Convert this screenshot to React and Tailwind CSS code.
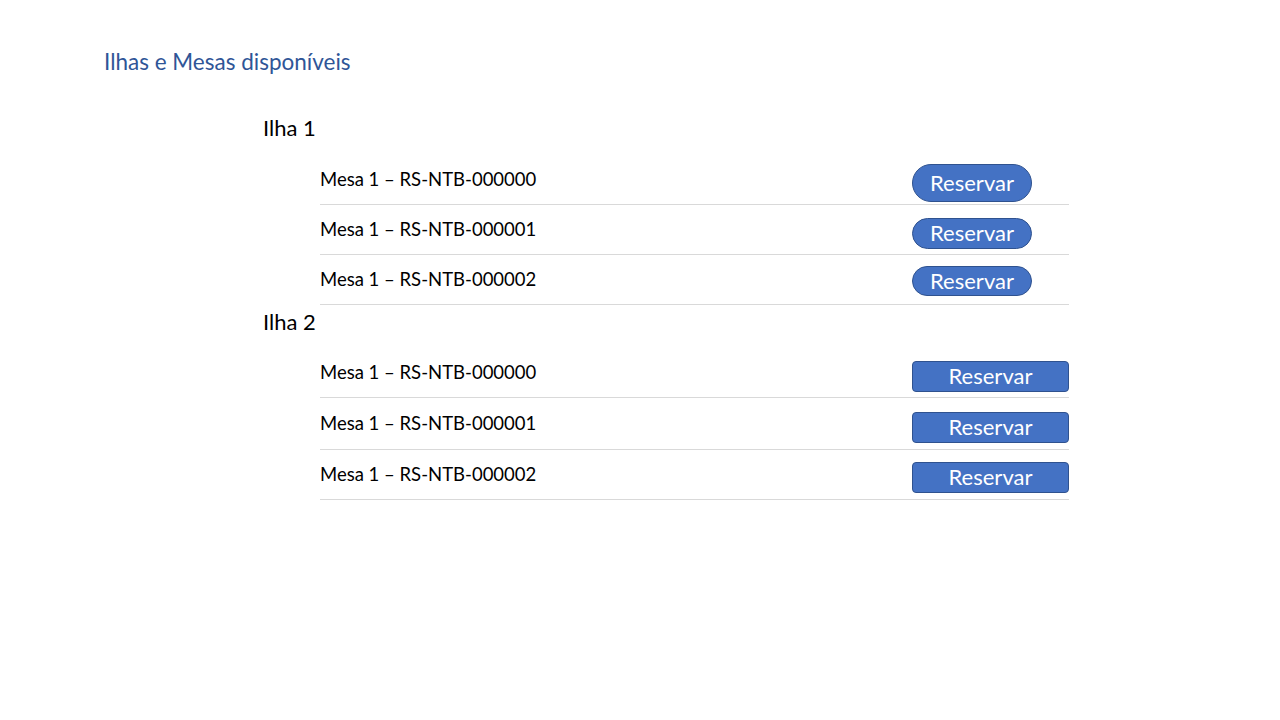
import React from 'react';

const ilhas = [
  {
    name: 'Ilha 1',
    shape: 'pill',
    mesas: [
      { label: 'Mesa 1 – RS-NTB-000000', h: 'h-[50px]', btn: 'h-[38px] mt-[6px]' },
      { label: 'Mesa 1 – RS-NTB-000001', h: 'h-[50px]', btn: 'h-[31px] mt-[7px]' },
      { label: 'Mesa 1 – RS-NTB-000002', h: 'h-[50px]', btn: 'h-[30px] mt-[2px]' },
    ],
  },
  {
    name: 'Ilha 2',
    shape: 'box',
    mesas: [
      { label: 'Mesa 1 – RS-NTB-000000', h: 'h-[49px]', btn: 'h-[31px] mt-[6px]' },
      { label: 'Mesa 1 – RS-NTB-000001', h: 'h-[52px]', btn: 'h-[31px] mt-[7px]' },
      { label: 'Mesa 1 – RS-NTB-000002', h: 'h-[50px]', btn: 'h-[31px] mt-[5px]' },
    ],
  },
];

function ReserveButton({ shape, size }) {
  const shapeCls = shape === 'pill' ? 'w-[120px] rounded-full' : 'w-[157px] rounded-[4px]';
  return (
    <button
      className={`${shapeCls} ${size} border border-[#2f528f] bg-[#4472c4] text-[22px] leading-none text-white`}
    >
      Reservar
    </button>
  );
}

export default function App() {
  return (
    <div className="h-[720px] w-[1280px] bg-white" style={{ fontFamily: 'Lato, "Open Sans", sans-serif' }}>
      <div className="pl-[104px] pt-[48px]">
        <h1 className="text-[22.5px] leading-[28px] text-[#2f5597]">Ilhas e Mesas disponíveis</h1>
      </div>

      <div className="mt-[35px] pl-[263px]">
        {ilhas.map((ilha) => (
          <div key={ilha.name}>
            <div className="h-[44px] text-[22px] leading-[34px] text-black">{ilha.name}</div>
            <div className="pl-[57px]">
              {ilha.mesas.map((mesa) => (
                <div
                  key={mesa.label}
                  className={`flex ${mesa.h} w-[749px] items-center border-b border-[#d9d9d9]`}
                >
                  <span className="w-[592px] text-[18.5px] text-black">{mesa.label}</span>
                  <ReserveButton shape={ilha.shape} size={mesa.btn} />
                </div>
              ))}
            </div>
          </div>
        ))}
      </div>
    </div>
  );
}
